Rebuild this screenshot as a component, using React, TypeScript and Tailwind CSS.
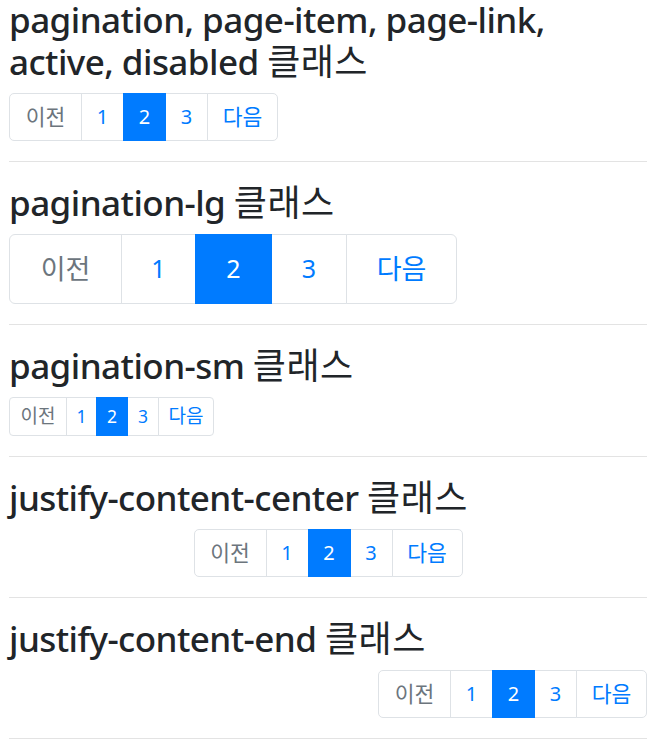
import React from "react";

type Size = "md" | "lg" | "sm";

const CFG: Record<
  Size,
  { h: string; text: string; ko: string; widths: string[]; rl: string; rr: string }
> = {
  md: {
    h: "h-[48px]",
    text: "text-[20px]",
    ko: "text-[21.5px]",
    widths: ["w-[73px]", "w-[43px]", "w-[43px]", "w-[43px]", "w-[71px]"],
    rl: "rounded-l-[5px]",
    rr: "rounded-r-[5px]",
  },
  lg: {
    h: "h-[70px]",
    text: "text-[25px]",
    ko: "text-[27px]",
    widths: ["w-[113px]", "w-[75px]", "w-[77px]", "w-[76px]", "w-[111px]"],
    rl: "rounded-l-[6px]",
    rr: "rounded-r-[6px]",
  },
  sm: {
    h: "h-[39px]",
    text: "text-[17.5px]",
    ko: "text-[19px]",
    widths: ["w-[58px]", "w-[31px]", "w-[32px]", "w-[32px]", "w-[56px]"],
    rl: "rounded-l-[4px]",
    rr: "rounded-r-[4px]",
  },
};

const ITEMS = [
  { label: "이전", state: "disabled", ko: true },
  { label: "1", state: "normal", ko: false },
  { label: "2", state: "active", ko: false },
  { label: "3", state: "normal", ko: false },
  { label: "다음", state: "normal", ko: true },
];

function Pager({ size, justify }: { size: Size; justify: string }) {
  const c = CFG[size];
  return (
    <div className={`flex ${justify}`}>
      <ul className="flex">
        {ITEMS.map((it, i) => {
          const first = i === 0;
          const last = i === ITEMS.length - 1;
          const stateCls =
            it.state === "active"
              ? "bg-[#007bff] border-[#007bff] text-white relative z-10"
              : it.state === "disabled"
              ? "bg-white border-[#dee2e6] text-[#6c757d]"
              : "bg-white border-[#dee2e6] text-[#007bff]";
          return (
            <li
              key={i}
              className={`flex items-center justify-center border ${c.h} ${it.ko ? c.ko : c.text} ${c.widths[i]} ${stateCls} ${
                first ? c.rl : "-ml-px"
              } ${last ? c.rr : ""}`}
            >
              {it.label}
            </li>
          );
        })}
      </ul>
    </div>
  );
}

function Heading({ children }: { children: React.ReactNode }) {
  return (
    <h3 className="text-[35px] leading-[42px] font-medium tracking-[-0.55px] text-[#212529] mb-[10px]">
      {children}
    </h3>
  );
}

function Ko({ children }: { children: React.ReactNode }) {
  return <span className="font-normal tracking-[0.5px] text-[36px]">{children}</span>;
}

export default function App() {
  return (
    <div className="bg-white min-h-[750px] w-[659px] overflow-hidden">
      <div
        className="ml-[9px] w-[638px] -mt-px"
        style={{ fontFamily: '"Noto Sans", "Noto Sans CJK KR", sans-serif' }}
      >
        <Heading>
          pagination, page-item, page-link, active, disabled <Ko>클래스</Ko>
        </Heading>
        <div className="mb-[20px]">
          <Pager size="md" justify="justify-start" />
        </div>
        <hr className="border-0 border-t border-[#e3e3e3] mb-[20px]" />

        <Heading>
          pagination-lg <Ko>클래스</Ko>
        </Heading>
        <div className="mb-[20px]">
          <Pager size="lg" justify="justify-start" />
        </div>
        <hr className="border-0 border-t border-[#e3e3e3] mb-[20px]" />

        <Heading>
          pagination-sm <Ko>클래스</Ko>
        </Heading>
        <div className="mb-[20px]">
          <Pager size="sm" justify="justify-start" />
        </div>
        <hr className="border-0 border-t border-[#e3e3e3] mb-[20px]" />

        <Heading>
          justify-content-center <Ko>클래스</Ko>
        </Heading>
        <div className="mb-[20px]">
          <Pager size="md" justify="justify-center" />
        </div>
        <hr className="border-0 border-t border-[#e3e3e3] mb-[20px]" />

        <Heading>
          justify-content-end <Ko>클래스</Ko>
        </Heading>
        <div className="mb-[20px]">
          <Pager size="md" justify="justify-end" />
        </div>
        <hr className="border-0 border-t border-[#e3e3e3] mb-[20px]" />
      </div>
    </div>
  );
}
